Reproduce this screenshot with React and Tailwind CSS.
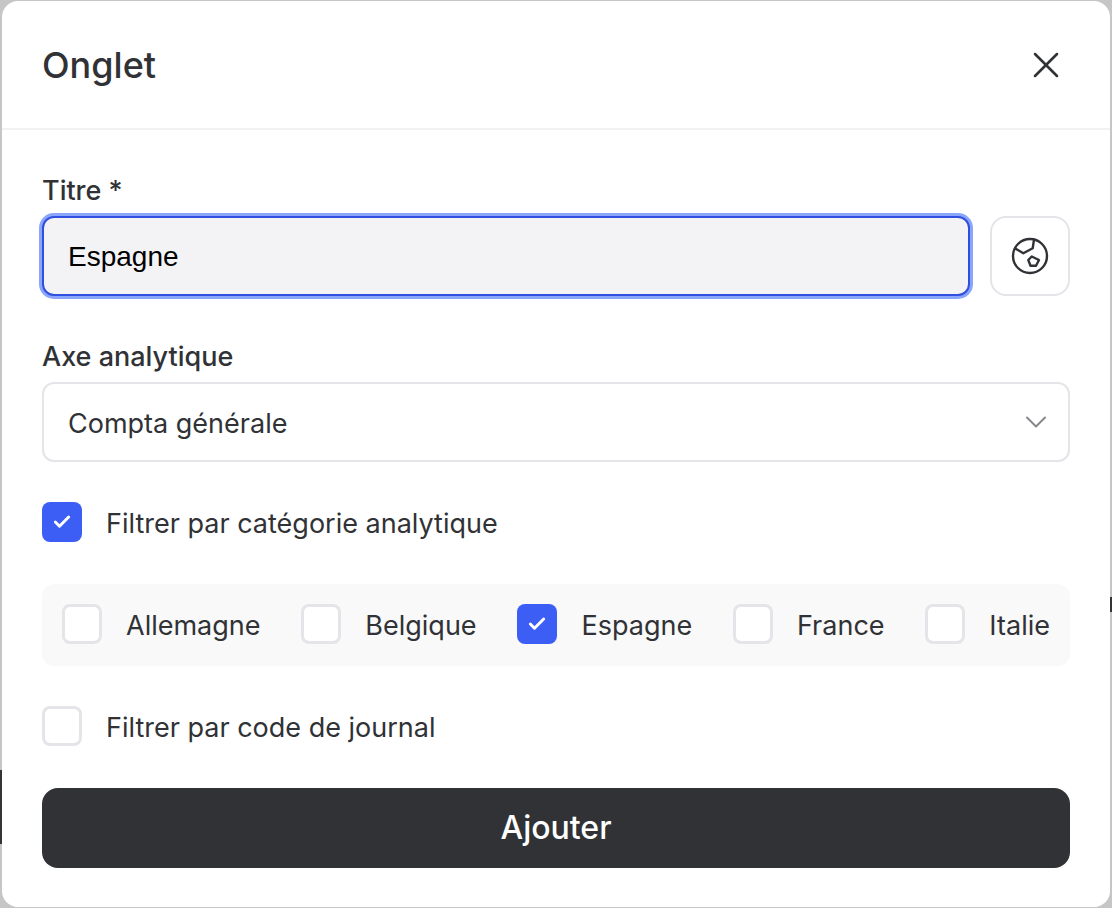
import React from "react";
import { X, ChevronDown, Check } from "lucide-react";

function Box({ checked }) {
  if (checked) {
    return (
      <span className="flex h-10 w-10 shrink-0 items-center justify-center rounded-lg bg-[#3d5ef5]">
        <Check size={20} strokeWidth={3.5} className="text-white" />
      </span>
    );
  }
  return <span className="h-10 w-10 shrink-0 rounded-lg border-[3px] border-[#e4e4e9] bg-white" />;
}

function Option({ label, checked }) {
  return (
    <label className="flex items-center gap-6 text-[27px] leading-8 text-[#303236]">
      <Box checked={checked} />
      <span className="pt-1">{label}</span>
    </label>
  );
}

function GlobeIcon() {
  return (
    <svg width="40" height="40" viewBox="0 0 40 40" fill="none" stroke="#303236" strokeWidth="2.4" strokeLinejoin="round" strokeLinecap="round">
      <circle cx="20" cy="20" r="17" />
      <path d="M5.2 12.5 L13.3 17.3 L22.7 12.3 L24 3.6" />
      <path d="M18.3 24 L21.7 20.5 L29 24 L26 29.7 L20.5 29.7 Z" />
    </svg>
  );
}

export default function App() {
  return (
    <div className="relative h-[908px] w-[1112px] overflow-hidden bg-[#c6c6c6] pt-px pr-0.5 pb-px pl-0.5 font-['Inter',sans-serif]">
      <div className="absolute left-0 top-[770px] h-[74px] w-0.5 bg-[#333438]" />
      <div className="absolute right-0 top-[597px] h-[15px] w-0.5 bg-[#333438]" />

      <div className="flex h-[906px] flex-col rounded-2xl bg-white">
        <div className="flex h-[129px] items-center justify-between border-b-2 border-[#f2f2f4] px-10">
          <h1 className="text-[36px] font-medium leading-10 text-[#303236]">Onglet</h1>
          <button className="mr-0.5 text-[#303236]">
            <X size={44} strokeWidth={1.4} />
          </button>
        </div>

        <div className="flex flex-1 flex-col px-10 pt-11">
          <label className="pt-px text-[27px] font-medium leading-8 text-[#303236]">Titre *</label>
          <div className="mt-[9px] flex gap-5">
            <input
              readOnly
              value="Espagne"
              className="h-20 flex-1 rounded-xl border-2 border-[#2f4fe0] bg-[#f3f3f6] px-6 pt-0.5 font-['Liberation_Sans',sans-serif] text-[28px] text-black outline-none ring-[3px] ring-[#8aa5fb]"
            />
            <button className="flex h-20 w-20 items-center justify-center rounded-2xl border-2 border-[#e4e4e9] bg-white">
              <GlobeIcon />
            </button>
          </div>

          <label className="mt-11 pt-px text-[27px] font-medium leading-8 text-[#303236]">Axe analytique</label>
          <div className="mt-[9px] flex h-20 items-center justify-between rounded-xl border-2 border-[#e4e4e9] bg-white pl-6 pr-3.5 text-[27px] text-[#303236]">
            <span className="pt-1">Compta générale</span>
            <ChevronDown size={36} strokeWidth={1.3} className="text-[#85868a]" />
          </div>

          <div className="mt-10">
            <Option label="Filtrer par catégorie analytique" checked />
          </div>

          <div className="mt-[42px] flex h-[82px] items-start justify-between rounded-xl bg-[#f9f9fa] px-5 pt-5">
            <Option label="Allemagne" />
            <Option label="Belgique" />
            <Option label="Espagne" checked />
            <Option label="France" />
            <Option label="Italie" />
          </div>

          <div className="mt-10">
            <Option label="Filtrer par code de journal" />
          </div>

          <button className="mt-[42px] h-20 w-full rounded-2xl bg-[#313236] text-[32px] font-medium text-white">
            Ajouter
          </button>
        </div>
      </div>
    </div>
  );
}
